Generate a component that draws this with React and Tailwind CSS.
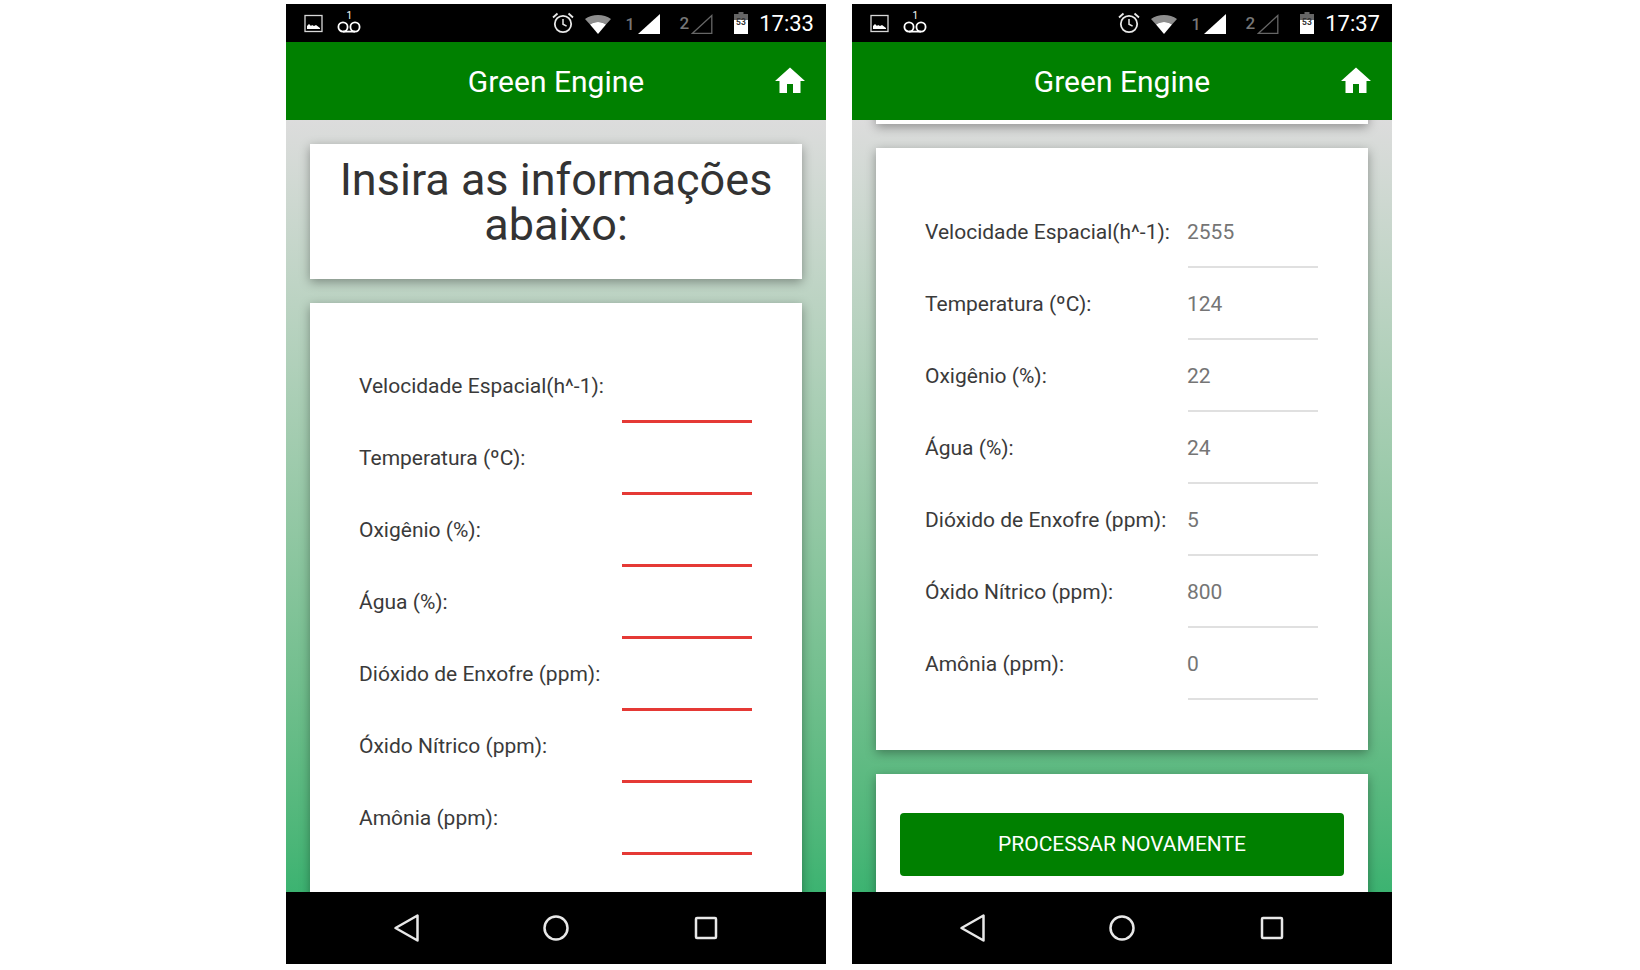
import { MdHome } from "react-icons/md";

const FIELDS = [
  { label: "Velocidade Espacial(h^-1):", value: "2555" },
  { label: "Temperatura (ºC):", value: "124" },
  { label: "Oxigênio (%):", value: "22" },
  { label: "Água (%):", value: "24" },
  { label: "Dióxido de Enxofre (ppm):", value: "5" },
  { label: "Óxido Nítrico (ppm):", value: "800" },
  { label: "Amônia (ppm):", value: "0" },
];

// Status bar glyphs
const ImageIcon = () => (
  <svg width="19" height="19" viewBox="0 0 19 19" className="ml-[18px] mt-[1px]">
    <rect x="1" y="1.5" width="17" height="16" fill="none" stroke="#d8d8d8" strokeWidth="1.3" />
    <path d="M3 15v-3l2-2 2 2 1-1 2 1 2-1 4 3v1z" fill="#fff" />
  </svg>
);

const VoicemailIcon = () => (
  <svg width="26" height="24" viewBox="0 0 26 24" className="ml-[13px] mb-[1px]">
    <circle cx="7" cy="16" r="4.6" fill="none" stroke="#fff" strokeWidth="1.8" />
    <circle cx="19" cy="16" r="4.6" fill="none" stroke="#fff" strokeWidth="1.8" />
    <path d="M7 20.6h12" stroke="#fff" strokeWidth="1.8" />
    <text x="10.5" y="8" fill="#fff" fontSize="10" fontFamily="Roboto, sans-serif">1</text>
  </svg>
);

const AlarmIcon = () => (
  <svg width="24" height="24" viewBox="0 0 24 24">
    <circle cx="12" cy="13" r="8.2" fill="none" stroke="#e8e8e8" strokeWidth="1.8" />
    <path d="M12 8v5.2l3.6 2" fill="none" stroke="#e8e8e8" strokeWidth="1.5" />
    <path d="M2 6.5 6.5 2.5M22 6.5l-4.5-4" stroke="#e8e8e8" strokeWidth="1.8" />
  </svg>
);

const WifiIcon = () => (
  <svg width="26" height="20" viewBox="0 0 26 20">
    <path d="M0 5C7-.5 19-.5 26 5l-5 5.500C17 7 9 7 5 10.500z" fill="#8e8e8e" />
    <path d="M5 10.500C9 7 17 7 21 10.500L13 20z" fill="#fff" />
  </svg>
);

const SignalIcon = ({ filled }) => (
  <svg width="22" height="20" viewBox="0 0 22 20">
    {filled ? (
      <path d="M0 20 22 0v20z" fill="#fff" />
    ) : (
      <path d="M1.500 19.300 20.800 1.500v17.800z" fill="none" stroke="#666" strokeWidth="1.300" />
    )}
  </svg>
);

const BatteryIcon = () => (
  <svg width="14" height="22" viewBox="0 0 14 22">
    <path d="M4.500 0h5v2H14v6H0V2h4.500z" fill="#666" />
    <rect y="8" width="14" height="14" fill="#fff" />
    <text x="7" y="13" textAnchor="middle" fill="#333" fontSize="8.500" fontWeight="700" fontFamily="Roboto, sans-serif">53</text>
  </svg>
);

const StatusBar = ({ time }) => (
  <div className="flex h-[38px] shrink-0 items-center bg-black text-white">
    <ImageIcon />
    <VoicemailIcon />
    <div className="ml-auto flex items-center">
      <AlarmIcon />
      <div className="ml-[10px] mt-[2px]"><WifiIcon /></div>
      <span className="ml-[14px] mt-[3px] text-[16px] font-medium text-[#777]">1</span>
      <div className="ml-[3px] mt-[2px]"><SignalIcon filled /></div>
      <span className="ml-[20px] mt-[1px] text-[17px] font-medium text-[#777]">2</span>
      <div className="ml-[2px] mt-[2px]"><SignalIcon /></div>
      <div className="ml-[21px]"><BatteryIcon /></div>
      <span className="ml-[11px] mr-[12px] mt-[2px] text-[22px] leading-none">{time}</span>
    </div>
  </div>
);

const Header = () => (
  <div className="relative z-10 flex h-[78px] shrink-0 items-center justify-center bg-[#008000] text-white">
    <span className="text-[30px]">Green Engine</span>
    <MdHome className="absolute right-[18px] top-[21px] h-[36px] w-[36px]" />
  </div>
);

const NavBar = () => (
  <div className="flex h-[72px] shrink-0 items-center justify-center gap-[100px] bg-black">
    <svg width="50" height="30" viewBox="0 0 50 30">
      <path d="M36.500 2.500v25L14.500 15z" fill="none" stroke="#e8e8e8" strokeWidth="2.500" strokeLinejoin="round" />
    </svg>
    <svg width="50" height="30" viewBox="0 0 50 30">
      <circle cx="25" cy="15" r="11.500" fill="none" stroke="#e8e8e8" strokeWidth="2.500" />
    </svg>
    <svg width="50" height="30" viewBox="0 0 50 30">
      <rect x="15" y="5" width="20" height="20" rx="1" fill="none" stroke="#e8e8e8" strokeWidth="2.500" />
    </svg>
  </div>
);

const Card = ({ className, children }) => (
  <div className={`shrink-0 bg-white shadow-[0_3px_10px_rgba(0,0,0,0.35)] ${className}`}>{children}</div>
);

const FieldRow = ({ label, value, underline, labelOffset }) => (
  <div className="flex h-[72px] items-center justify-between">
    <span className={`text-[21px] text-[#3a3a3a] ${labelOffset}`}>{label}</span>
    <div className={`flex h-full w-[130px] items-center ${underline}`}>
      <span className="ml-[-1px] mt-[3px] text-[21px] text-[#757575]">{value}</span>
    </div>
  </div>
);

const Phone = ({ time, children }) => (
  <div className="flex h-[960px] w-[540px] flex-col overflow-hidden">
    <StatusBar time={time} />
    <Header />
    <div className="flex min-h-0 flex-1 flex-col overflow-hidden bg-gradient-to-b from-[#dcdcdc] to-[#3cb371] px-[24px]">
      {children}
    </div>
    <NavBar />
  </div>
);

export default function App() {
  return (
    <div className="flex h-[970px] w-[1640px] gap-[26px] bg-white pl-[286px] pt-[4px] font-['Roboto',sans-serif]">
      <Phone time="17:33">
        <Card className="mt-[24px] h-[135px] text-center text-[45px] leading-[45px] text-[#333]">
          <div className="pt-[13px]">Insira as informações abaixo:</div>
        </Card>
        <Card className="mt-[24px] pl-[49px] pr-[50px] pt-[48px] pb-[50px]">
          {FIELDS.map((f) => (
            <FieldRow key={f.label} label={f.label} labelOffset="mt-[-1px]" underline="border-b-[3px] border-[#e53935]" />
          ))}
        </Card>
      </Phone>
      <Phone time="17:37">
        <Card className="mt-[-131px] h-[135px]" />
        <Card className="mt-[24px] pl-[49px] pr-[50px] pt-[48px] pb-[50px]">
          {FIELDS.map((f) => (
            <FieldRow key={f.label} label={f.label} value={f.value} labelOffset="mt-[1px]" underline="border-b-2 border-[#e0e0e0]" />
          ))}
        </Card>
        <Card className="mt-[24px] px-[24px] pt-[39px] pb-[24px]">
          <button className="h-[63px] w-full rounded-[4px] bg-[#008000] text-[21px] text-white">
            PROCESSAR NOVAMENTE
          </button>
        </Card>
      </Phone>
    </div>
  );
}
